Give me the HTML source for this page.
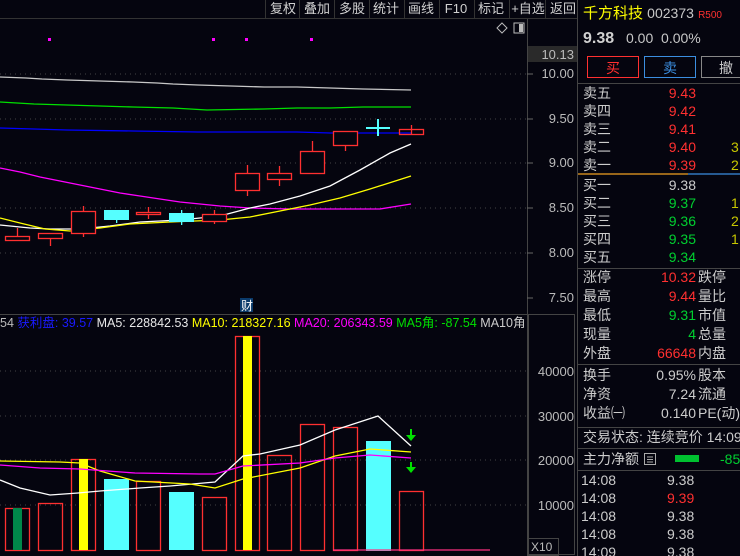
<!DOCTYPE html>
<html><head><meta charset="utf-8"><style>
html,body{margin:0;padding:0;background:#05050f;width:740px;height:556px;overflow:hidden}
svg{display:block}
text{font-family:"Liberation Sans","Noto Sans CJK SC",sans-serif}
</style></head><body>
<svg width="740" height="556" xmlns="http://www.w3.org/2000/svg">
<rect width="740" height="556" fill="#05050f"/>
<!-- toolbar -->
<line x1="0" y1="18.5" x2="578" y2="18.5" stroke="#333"/>
<g font-size="13" fill="#d0d0d0" text-anchor="middle">
<text x="283" y="13">复权</text><text x="317" y="13">叠加</text><text x="352" y="13">多股</text>
<text x="386" y="13">统计</text><text x="421" y="13">画线</text><text x="456" y="13">F10</text>
<text x="491" y="13">标记</text><text x="528" y="13">+自选</text><text x="563" y="13">返回</text>
</g>
<g stroke="#333"><line x1="265.5" y1="0" x2="265.5" y2="18"/><line x1="299.5" y1="0" x2="299.5" y2="18"/><line x1="334.5" y1="0" x2="334.5" y2="18"/><line x1="369.5" y1="0" x2="369.5" y2="18"/><line x1="404.5" y1="0" x2="404.5" y2="18"/><line x1="439.5" y1="0" x2="439.5" y2="18"/><line x1="474.5" y1="0" x2="474.5" y2="18"/><line x1="509.5" y1="0" x2="509.5" y2="18"/><line x1="545.5" y1="0" x2="545.5" y2="18"/></g>
<line x1="577.5" y1="0" x2="577.5" y2="556" stroke="#444"/>
<line x1="527.5" y1="19" x2="527.5" y2="556" stroke="#444"/>
<!-- diamond & icon -->
<path d="M502 23 L507 28 L502 33 L497 28 Z" fill="none" stroke="#bbb"/>
<rect x="514" y="23" width="10" height="10" fill="none" stroke="#bbb"/><rect x="519" y="24" width="4" height="8" fill="#bbb"/>
<!-- magenta dots -->
<g fill="#ff00ff"><rect x="48" y="38" width="3" height="3"/><rect x="212" y="38" width="3" height="3"/><rect x="245" y="38" width="3" height="3"/><rect x="310" y="38" width="3" height="3"/></g>
<!-- grid -->
<g stroke="#444" stroke-dasharray="1,4"><line x1="0" y1="74" x2="527" y2="74"/><line x1="0" y1="119" x2="527" y2="119"/><line x1="0" y1="163" x2="527" y2="163"/><line x1="0" y1="208" x2="527" y2="208"/><line x1="0" y1="253" x2="527" y2="253"/>
<line x1="0" y1="371" x2="527" y2="371"/><line x1="0" y1="416" x2="527" y2="416"/><line x1="0" y1="460" x2="527" y2="460"/><line x1="0" y1="505" x2="527" y2="505"/></g>
<!-- axis -->
<rect x="528" y="46" width="49" height="16" fill="#2a2a2a"/>
<g font-size="13" fill="#bbb" text-anchor="end"><text x="574" y="59">10.13</text><text x="574" y="78">10.00</text><text x="574" y="123">9.50</text><text x="574" y="167">9.00</text><text x="574" y="212">8.50</text><text x="574" y="257">8.00</text><text x="574" y="302">7.50</text>
<text x="574" y="376">40000</text><text x="574" y="421">30000</text><text x="574" y="465">20000</text><text x="574" y="510">10000</text></g>
<g stroke="#666"><line x1="527" y1="74" x2="533" y2="74"/><line x1="527" y1="119" x2="533" y2="119"/><line x1="527" y1="163" x2="533" y2="163"/><line x1="527" y1="208" x2="533" y2="208"/><line x1="527" y1="253" x2="533" y2="253"/><line x1="527" y1="298" x2="533" y2="298"/></g>
<line x1="0" y1="314.5" x2="527" y2="314.5" stroke="#444"/>
<rect x="528.5" y="314.5" width="46" height="240" fill="none" stroke="#444"/>
<rect x="528.5" y="538.5" width="30" height="17" fill="none" stroke="#444"/>
<text x="531" y="551" font-size="12" fill="#bbb">X10</text>
<!-- MA lines price -->
<polyline fill="none" stroke="#c8c8c8" stroke-width="1.3" points="0,77 26,78 42,79 67,80 100,81 133,82 157,83 173,84 198,85 231,86 264,87 297,87 330,88 363,89 411,90"/>
<polyline fill="none" stroke="#00e000" stroke-width="1.3" points="0,102 34,104 67,105 100,106 133,107 173,108 207,110 264,109 297,108 330,108 363,107 411,107"/>
<polyline fill="none" stroke="#0000ff" stroke-width="1.3" points="0,128 34,129 67,130 133,131 198,132 297,132 330,133 411,133"/>
<polyline fill="none" stroke="#ff00ff" stroke-width="1.3" points="0,168 20,172 40,177 60,181 80,185 100,189 120,193 140,196 160,199 180,202 200,204 220,206 250,208 290,209 330,209 380,209 411,204"/>
<polyline fill="none" stroke="#fff" stroke-width="1.3" points="0,225 30,228 50,229 80,229 110,226 140,222 180,220 220,216 250,208 270,204 300,196 330,186 360,170 390,153 411,144"/>
<polyline fill="none" stroke="#ffff00" stroke-width="1.3" points="0,218 20,223 45,229 70,231 100,228 130,224 170,222 220,220 250,217 280,211 310,205 340,198 370,189 411,176"/>
<!-- candles -->
<g stroke="#ff3030" fill="none" stroke-width="1.3">
<line x1="17.5" y1="228" x2="17.5" y2="236"/><rect x="5.5" y="236.5" width="24" height="4"/>
<line x1="50.5" y1="238" x2="50.5" y2="246"/><rect x="38.5" y="233.5" width="24" height="5"/>
<line x1="83.5" y1="206" x2="83.5" y2="237"/><rect x="71.5" y="211.5" width="24" height="22" fill="#05050f"/>
<line x1="148.5" y1="207" x2="148.5" y2="219"/><rect x="136.5" y="212.5" width="24" height="2" fill="#05050f"/>
<line x1="214.5" y1="210" x2="214.5" y2="224"/><rect x="202.5" y="214.5" width="24" height="7" fill="#05050f"/>
<line x1="247.5" y1="165" x2="247.5" y2="196"/><rect x="235.5" y="173.5" width="24" height="17" fill="#05050f"/>
<line x1="279.5" y1="166" x2="279.5" y2="186"/><rect x="267.5" y="173.5" width="24" height="6" fill="#05050f"/>
<line x1="312.5" y1="141" x2="312.5" y2="151"/><rect x="300.5" y="151.5" width="24" height="22" fill="#05050f"/>
<line x1="345.5" y1="145" x2="345.5" y2="151"/><rect x="333.5" y="131.5" width="24" height="14" fill="#05050f"/>
<line x1="411.5" y1="125" x2="411.5" y2="134"/><rect x="399.5" y="129.5" width="24" height="5"/>
</g>
<g fill="#55ffff"><rect x="104" y="210" width="25" height="10"/><rect x="116" y="219" width="1.3" height="4"/>
<rect x="169" y="213" width="25" height="9"/><rect x="181" y="210" width="1.3" height="15"/>
<rect x="366" y="127" width="24" height="2"/><rect x="377" y="119" width="2" height="17"/><rect x="366" y="127" width="2" height="2"/></g>
<!-- 财 -->
<rect x="240" y="298" width="13" height="14" fill="#0a3a6a"/>
<text x="241" y="310" font-size="12" fill="#fff">财</text>
<!-- volume title -->
<text x="0" y="327" font-size="12.5" fill="#bbb">54 <tspan fill="#1a1aff">获利盘: 39.57</tspan> <tspan fill="#e8e8e8">MA5: 228842.53</tspan> <tspan fill="#ffff00">MA10: 218327.16</tspan> <tspan fill="#ff00ff">MA20: 206343.59</tspan> <tspan fill="#00e000">MA5角: -87.54</tspan> <tspan fill="#ccc">MA10角</tspan></text>
<rect x="528" y="316" width="49" height="18" fill="#05050f"/>
<rect x="528.5" y="314.5" width="46" height="240" fill="none" stroke="#444"/>
<!-- volume bars -->
<g stroke="#ff3030" fill="none" stroke-width="1.3">
<rect x="5.5" y="508.5" width="24" height="42"/><rect x="38.5" y="503.5" width="24" height="47"/>
<rect x="71.5" y="459.5" width="24" height="91"/><rect x="136.5" y="481.5" width="24" height="69"/>
<rect x="202.5" y="497.5" width="24" height="53"/><rect x="235.5" y="336.5" width="24" height="214"/>
<rect x="267.5" y="455.5" width="24" height="95"/><rect x="300.5" y="424.5" width="24" height="126"/>
<rect x="333.5" y="427.5" width="24" height="123"/><rect x="399.5" y="491.5" width="24" height="59"/>
</g>
<rect x="13" y="508" width="9" height="42" fill="#00884a"/>
<rect x="79" y="459" width="9" height="91" fill="#ffff00"/>
<rect x="243" y="336" width="9" height="214" fill="#ffff00"/>
<g fill="#55ffff"><rect x="104" y="479" width="25" height="71"/><rect x="169" y="492" width="25" height="58"/><rect x="366" y="441" width="25" height="110"/></g>
<line x1="333" y1="550" x2="490" y2="550" stroke="#ff3080" stroke-width="1.3"/>
<polyline fill="none" stroke="#fff" stroke-width="1.3" points="0,480 20,488 50,495 78,493 100,491 140,488 170,486 215,482 243,456 260,454 300,445 335,430 378,416 411,446"/>
<polyline fill="none" stroke="#ffff00" stroke-width="1.3" points="0,461 60,462 80,463 100,471 135,481 190,484 215,488 243,479 300,468 335,456 370,449 411,452"/>
<polyline fill="none" stroke="#ff00ff" stroke-width="1.3" points="0,465 40,468 80,469 135,473 200,474 215,474 243,466 300,463 335,458 370,455 411,458"/>
<g fill="#00e000"><rect x="410" y="429" width="2" height="7"/><path d="M406 435 L416 435 L411 441 Z"/><rect x="410" y="462" width="2" height="7"/><path d="M406 467 L416 467 L411 473 Z"/></g>
<!-- right panel -->
<text x="583" y="18" font-size="15" fill="#ffff00">千方科技 <tspan fill="#c8c8c8" font-size="14">002373</tspan> <tspan fill="#ff3030" font-size="10">R500</tspan></text>
<text x="583" y="43" font-size="16" font-weight="bold" fill="#d0d0d0">9.38</text>
<text x="626" y="43" font-size="14" fill="#c8c8c8">0.00 &#160;0.00%</text>
<rect x="587.5" y="56.5" width="51" height="21" fill="none" stroke="#ff3030"/>
<text x="613" y="73" font-size="14" fill="#ff3030" text-anchor="middle">买</text>
<rect x="644.5" y="56.5" width="51" height="21" fill="none" stroke="#3b8ee0"/>
<text x="670" y="73" font-size="14" fill="#3b8ee0" text-anchor="middle">卖</text>
<rect x="701.5" y="56.5" width="45" height="21" fill="none" stroke="#888"/>
<text x="726" y="73" font-size="14" fill="#ccc" text-anchor="middle">撤</text>
<line x1="578" y1="83.5" x2="740" y2="83.5" stroke="#444"/>
<g font-size="14" fill="#ccc">
<text x="583" y="98">卖五</text><text x="583" y="116">卖四</text><text x="583" y="134">卖三</text><text x="583" y="152">卖二</text><text x="583" y="170">卖一</text>
<text x="583" y="190">买一</text><text x="583" y="208">买二</text><text x="583" y="226">买三</text><text x="583" y="244">买四</text><text x="583" y="262">买五</text>
<text x="583" y="282">涨停</text><text x="583" y="301">最高</text><text x="583" y="320">最低</text><text x="583" y="339">现量</text><text x="583" y="358">外盘</text>
<text x="583" y="380">换手</text><text x="583" y="399">净资</text><text x="583" y="418">收益㈠</text>
<text x="583" y="442">交易状态: 连续竞价 14:09</text><text x="583" y="464">主力净额</text>
<text x="698" y="282">跌停</text><text x="698" y="301">量比</text><text x="698" y="320">市值</text><text x="698" y="339">总量</text><text x="698" y="358">内盘</text>
<text x="698" y="380">股本</text><text x="698" y="399">流通</text><text x="698" y="418">PE(动)</text>
</g>
<g font-size="14" text-anchor="end">
<g fill="#ff3030"><text x="696" y="98">9.43</text><text x="696" y="116">9.42</text><text x="696" y="134">9.41</text><text x="696" y="152">9.40</text><text x="696" y="170">9.39</text><text x="696" y="282">10.32</text><text x="696" y="301">9.44</text><text x="696" y="358">66648</text></g>
<text x="696" y="190" fill="#ccc">9.38</text>
<g fill="#00d030"><text x="696" y="208">9.37</text><text x="696" y="226">9.36</text><text x="696" y="244">9.35</text><text x="696" y="262">9.34</text><text x="696" y="320">9.31</text><text x="696" y="339">4</text></g>
<g fill="#ccc"><text x="696" y="380">0.95%</text><text x="696" y="399">7.24</text><text x="696" y="418">0.140</text></g>
</g>
<g font-size="14" fill="#c8c800"><text x="731" y="152">3</text><text x="731" y="170">2</text><text x="731" y="208">1</text><text x="731" y="226">2</text><text x="731" y="244">1</text></g>
<line x1="578" y1="174" x2="688" y2="174" stroke="#f0a020" stroke-width="1.3"/>
<line x1="688" y1="174" x2="740" y2="174" stroke="#3b8ee0" stroke-width="1.3"/>
<g stroke="#444"><line x1="578" y1="268.5" x2="740" y2="268.5"/><line x1="578" y1="364.5" x2="740" y2="364.5"/><line x1="578" y1="427.5" x2="740" y2="427.5"/><line x1="578" y1="448.5" x2="740" y2="448.5"/><line x1="578" y1="470.5" x2="740" y2="470.5"/></g>
<rect x="644.5" y="453.5" width="11" height="11" fill="none" stroke="#aaa"/><g stroke="#aaa"><line x1="647" y1="457" x2="653" y2="457"/><line x1="647" y1="459.5" x2="653" y2="459.5"/><line x1="647" y1="462" x2="653" y2="462"/></g>
<rect x="675" y="455" width="24" height="7" fill="#00c030"/>
<text x="720" y="464" font-size="14" fill="#00d030">-85</text>
<g font-size="14" fill="#ccc">
<text x="581" y="485">14:08</text><text x="581" y="503">14:08</text><text x="581" y="521">14:08</text><text x="581" y="539">14:08</text><text x="581" y="557">14:09</text>
<text x="667" y="485">9.38</text><text x="667" y="503" fill="#ff3030">9.39</text><text x="667" y="521">9.38</text><text x="667" y="539">9.38</text><text x="667" y="557">9.38</text>
</g>
</svg>
</body></html>
